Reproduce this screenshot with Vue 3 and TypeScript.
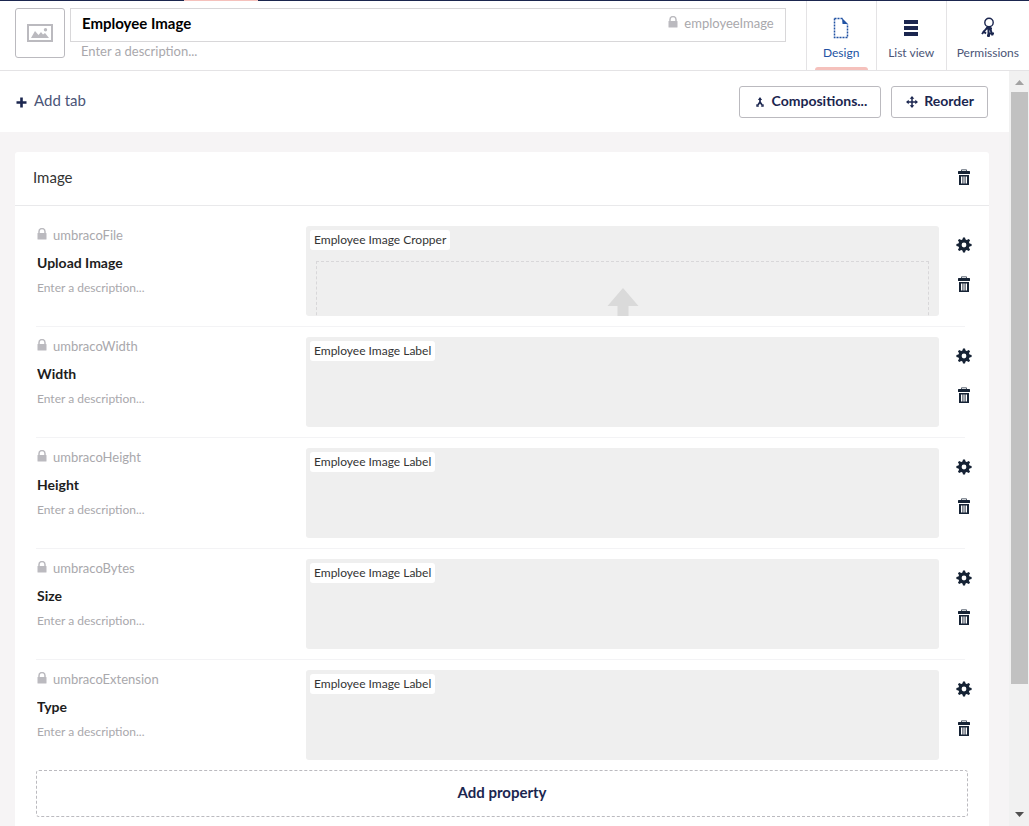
<script setup lang="ts">
import { ref } from 'vue'

interface Property {
  alias: string
  name: string
  description: string
  editor: string
  upload?: boolean
}

const name = ref('Employee Image')
const alias = ref('employeeImage')
const description = ref('')
const groupName = ref('Image')
const activeTab = ref('design')

const tabs = [
  { id: 'design', label: 'Design' },
  { id: 'list', label: 'List view' },
  { id: 'permissions', label: 'Permissions' },
]

const properties = ref<Property[]>([
  { alias: 'umbracoFile', name: 'Upload Image', description: '', editor: 'Employee Image Cropper', upload: true },
  { alias: 'umbracoWidth', name: 'Width', description: '', editor: 'Employee Image Label' },
  { alias: 'umbracoHeight', name: 'Height', description: '', editor: 'Employee Image Label' },
  { alias: 'umbracoBytes', name: 'Size', description: '', editor: 'Employee Image Label' },
  { alias: 'umbracoExtension', name: 'Type', description: '', editor: 'Employee Image Label' },
])
</script>

<template>
  <svg class="symbols" aria-hidden="true">
    <symbol id="i-lock" viewBox="0 0 10 12">
      <path d="M2 6V3.600a3 3 0 0 1 6 0V6" fill="none" stroke="currentColor" stroke-width="1.500" />
      <rect x="0.500" y="5" width="9" height="6.500" rx="0.600" fill="currentColor" />
    </symbol>
    <symbol id="i-trash" viewBox="0 0 12 16">
      <path d="M3.500 2.500V0.800h5v1.700" fill="none" stroke="currentColor" stroke-width="1" opacity="0.700" />
      <rect x="0" y="2" width="12" height="3" rx="0.500" fill="currentColor" />
      <path fill-rule="evenodd" fill="currentColor" d="M1 6h10v10H1zM3 7.500v7h1v-7zM5.500 7.500v7h1v-7zM8 7.500v7h1v-7z" />
      <path fill="#fff" opacity="0.450" d="M4 7.500h1.500v7H4zM6.500 7.500H8v7H6.500z" />
    </symbol>
    <symbol id="i-gear" viewBox="0 0 16 16">
      <g fill="currentColor">
        <path fill-rule="evenodd" d="M8 2.300a5.700 5.700 0 1 0 0 11.400a5.700 5.700 0 1 0 0-11.400zM8 5.600a2.400 2.400 0 1 1 0 4.800a2.400 2.400 0 1 1 0-4.800z" />
        <path v-for="a in 8" :key="a" d="M6.200 3.500L7 0.400h2l0.800 3.100z" :transform="`rotate(${a * 45} 8 8)`" />
      </g>
    </symbol>
  </svg>

  <div class="app">
    <div class="strip"><span class="strip-mark"></span></div>

    <header class="header">
      <button class="type-icon" type="button" aria-label="Choose icon">
        <svg width="26" height="18" viewBox="0 0 26 18">
          <rect x="1" y="1" width="24" height="16" fill="none" stroke="#bbbabf" stroke-width="2" />
          <path d="M4 14l4-7 3.500 4 2.500-3 2 2.500 2-1.500L22 14z" fill="#bbbabf" />
          <circle cx="18.500" cy="5.800" r="1.700" fill="#bbbabf" />
        </svg>
      </button>
      <div class="naming">
        <div class="name-box">
          <input v-model="name" class="name-input" aria-label="Name" />
          <span class="alias">
            <svg class="lock" width="10" height="12"><use href="#i-lock" /></svg>
            <span>{{ alias }}</span>
          </span>
        </div>
        <input v-model="description" class="desc-input" aria-label="Description" placeholder="Enter a description..." />
      </div>
      <nav class="tabs">
        <button
          v-for="tab in tabs"
          :key="tab.id"
          type="button"
          class="tab"
          :class="{ active: tab.id === activeTab }"
          @click="activeTab = tab.id"
        >
          <svg v-if="tab.id === 'design'" width="22" height="22" viewBox="0 0 22 22">
            <path d="M4.500 1.500V20.500H17.500V7M4.500 1.500H13" fill="none" stroke="currentColor" stroke-width="1.500" stroke-dasharray="2 1" />
            <path d="M12 1l6 6h-5.500z" fill="currentColor" />
          </svg>
          <svg v-else-if="tab.id === 'list'" width="22" height="22" viewBox="0 0 22 22">
            <path d="M4 3h14v4H4zM4 9h14v4H4zM4 15h14v4H4z" fill="currentColor" />
          </svg>
          <svg v-else width="22" height="22" viewBox="0 0 22 22" fill="none" stroke="currentColor">
            <circle cx="12" cy="5.500" r="4.200" stroke-width="1.400" />
            <path d="M11 9.500L5 17M12.500 9.500L15.500 18.500M11.500 9.500V20" stroke-width="2" />
            <path d="M9 11.500h6M6 14l3 2.500M12 16.500h5M10 18.500h3" stroke-width="1.800" />
          </svg>
          <span>{{ tab.label }}</span>
        </button>
      </nav>
    </header>

    <div class="body">
      <main class="content">
        <div class="toolbar">
          <button class="add-tab" type="button">
            <svg width="11" height="11" viewBox="0 0 11 11"><path d="M5.500 0.500v10M0.500 5.500h10" stroke="currentColor" stroke-width="2.600" /></svg>
            <span>Add tab</span>
          </button>
          <div class="tools">
            <button class="tool" type="button">
              <svg width="12" height="12" viewBox="0 0 12 12" fill="none" stroke="currentColor" stroke-width="1.700">
                <path d="M6 2.500v3.500L3.600 9.500M6 6l2.400 3.500" />
                <path d="M3.900 4L6 1l2.100 3zM2.300 8l2.900 2.800H2.300zM9.700 8l-2.900 2.800h2.900z" fill="currentColor" stroke="none" />
              </svg>
              <span>Compositions...</span>
            </button>
            <button class="tool" type="button">
              <svg width="12" height="12" viewBox="0 0 12 12">
                <path d="M6 1v10M1 6h10" stroke="currentColor" stroke-width="1.500" />
                <path d="M6 0l2.300 2.700H3.700zM6 12l2.300-2.700H3.700zM0 6l2.700-2.300v4.600zM12 6L9.300 3.700v4.600z" fill="currentColor" />
              </svg>
              <span>Reorder</span>
            </button>
          </div>
        </div>

        <section class="group">
          <div class="group-head">
            <input v-model="groupName" class="group-name" aria-label="Group name" />
            <button class="icon-btn" type="button" aria-label="Delete group">
              <svg width="12" height="16"><use href="#i-trash" /></svg>
            </button>
          </div>

          <div class="properties">
            <article v-for="p in properties" :key="p.alias" class="property">
              <div class="meta">
                <div class="prop-alias">
                  <svg class="lock" width="10" height="12"><use href="#i-lock" /></svg>
                  <span>{{ p.alias }}</span>
                </div>
                <input v-model="p.name" class="prop-name" :aria-label="`${p.alias} name`" />
                <input v-model="p.description" class="prop-desc" :aria-label="`${p.alias} description`" placeholder="Enter a description..." />
              </div>
              <div class="preview">
                <span class="editor">{{ p.editor }}</span>
                <div v-if="p.upload" class="dropzone">
                  <svg width="32" height="40" viewBox="0 0 32 40"><path d="M16 0l15.500 18H21.500v22h-11V18H0.500z" fill="#dadada" /></svg>
                </div>
              </div>
              <div class="actions">
                <button class="icon-btn" type="button" :aria-label="`Settings for ${p.name}`">
                  <svg width="16" height="16"><use href="#i-gear" /></svg>
                </button>
                <button class="icon-btn" type="button" :aria-label="`Delete ${p.name}`">
                  <svg width="12" height="16"><use href="#i-trash" /></svg>
                </button>
              </div>
            </article>
            <button class="add-property" type="button">Add property</button>
          </div>
        </section>
      </main>

      <div class="scrollbar" aria-hidden="true">
        <svg width="9" height="5" viewBox="0 0 9 5"><path d="M4.500 0L9 5H0z" fill="#a3a3a3" /></svg>
        <div class="track"><div class="thumb"></div></div>
        <svg width="9" height="5" viewBox="0 0 9 5"><path d="M0 0h9L4.500 5z" fill="#505050" /></svg>
      </div>
    </div>
  </div>
</template>

<style>
html,
body {
  margin: 0;
  overflow: hidden;
}
</style>

<style scoped>
.symbols {
  position: absolute;
  width: 0;
  height: 0;
}
.app {
  display: flex;
  flex-direction: column;
  height: 100vh;
  background: #fff;
  color: #1b264f;
  font-family: Lato, 'Liberation Sans', sans-serif;
  font-size: 15px;
}
.app *,
.app *::after {
  box-sizing: border-box;
}
svg {
  display: block;
  flex: none;
}
button,
input {
  margin: 0;
  padding: 0;
  border: 0;
  outline: 0;
  background: none;
  color: inherit;
  font: inherit;
  min-width: 0;
}
button {
  cursor: pointer;
}
input::placeholder {
  color: #a9a8ac;
  opacity: 1;
}
.strip {
  flex: none;
  height: 1px;
  padding-left: 184px;
  background: #1b264f;
}
.strip-mark {
  display: block;
  width: 74px;
  height: 1px;
  background: #f5c1bc;
}
.header {
  display: flex;
  flex: none;
  height: 70px;
  padding-left: 15px;
  border-bottom: 1px solid #e4e3e5;
}
.type-icon {
  display: flex;
  align-items: center;
  justify-content: center;
  flex: none;
  width: 50px;
  height: 50px;
  margin: 7px 5px 0 0;
  border: 1px solid #bbbabf;
  border-radius: 3px;
}
.naming {
  flex: 1;
  min-width: 0;
  padding-top: 7px;
}
.name-box {
  display: flex;
  align-items: center;
  height: 34px;
  padding: 0 11px;
  border: 1px solid #d8d7d9;
}
.name-input {
  flex: 1;
  height: 32px;
  padding-bottom: 4px;
  color: #000;
  font-weight: 700;
}
.alias,
.prop-alias {
  display: flex;
  align-items: center;
  gap: 6px;
  color: #a9a8ac;
  font-size: 13px;
}
.alias {
  padding-bottom: 4px;
}
.lock {
  margin-bottom: 2px;
  color: #bbbabf;
}
.desc-input {
  display: block;
  width: 100%;
  height: 18px;
  padding-left: 11px;
  font-size: 13px;
}
.tabs {
  display: flex;
  flex: none;
  margin-left: 20px;
}
.tab {
  display: flex;
  flex-direction: column;
  align-items: center;
  gap: 6px;
  min-width: 70px;
  padding: 16px 10px 0;
  border-left: 1px solid #e4e3e5;
  font-size: 12px;
  line-height: 16px;
  color: #4b5577;
}
.tab svg {
  color: #1b264f;
}
.tab.active,
.tab.active svg {
  color: #2152a3;
}
.tab.active {
  padding: 16px 8px 0;
}
.tab.active::after {
  content: '';
  width: 100%;
  height: 4px;
  margin-top: auto;
  border-radius: 3px 3px 0 0;
  background: #f5c1bc;
}
.body {
  display: flex;
  flex: 1;
  min-height: 0;
}
.content {
  flex: 1;
  min-width: 0;
  overflow: hidden;
  background: #f6f4f5;
}
.toolbar {
  display: flex;
  align-items: center;
  justify-content: space-between;
  height: 61px;
  padding: 0 21px 0 16px;
  background: #fff;
}
.add-tab {
  display: flex;
  align-items: center;
  gap: 7px;
  padding-bottom: 3px;
  color: #4b5577;
}
.add-tab svg {
  margin-top: 4px;
  color: #1b264f;
}
.tools {
  display: flex;
  gap: 10px;
}
.tool {
  display: flex;
  align-items: center;
  gap: 6px;
  height: 32px;
  padding: 0 13px 0 14px;
  border: 1px solid #bbbabf;
  border-radius: 3px;
  font-size: 14px;
  font-weight: 700;
}
.tool span {
  padding-bottom: 2px;
}
.group {
  margin: 20px 20px 0 15px;
  border-radius: 3px;
  background: #fff;
}
.group-head {
  display: flex;
  align-items: center;
  justify-content: space-between;
  height: 54px;
  padding: 0 19px 4px 18px;
  border-bottom: 1px solid #e9e9eb;
}
.group-name {
  flex: 1;
  height: 32px;
  color: #343434;
}
.icon-btn {
  display: block;
  color: #162335;
}
.properties {
  padding: 10px 0 20px 21px;
}
.property {
  display: grid;
  grid-template-columns: 270px minmax(0, 1fr) 50px;
  padding-top: 10px;
}
.property:not(:nth-last-child(2))::after {
  content: '';
  grid-column: 1 / -1;
  height: 1px;
  margin: 10px 24px 0 0;
  background: #f3f3f5;
}
.meta {
  padding: 0 20px 0 1px;
}
.prop-alias {
  height: 18px;
}
.prop-name,
.prop-desc {
  display: block;
  width: 100%;
  height: 24px;
}
.prop-name {
  margin-top: 6px;
  color: #1d1d1d;
  font-size: 14px;
  font-weight: 700;
}
.prop-desc {
  height: 26px;
  font-size: 12px;
}
.preview {
  height: 90px;
  padding: 4px;
  overflow: hidden;
  border-radius: 3px;
  background: #efefef;
}
.editor {
  display: block;
  width: fit-content;
  padding: 0 4px;
  border-radius: 3px;
  background: #fff;
  color: #343434;
  font-size: 12px;
  line-height: 20px;
}
.dropzone {
  display: flex;
  justify-content: center;
  height: 90px;
  margin: 11px 6px 0;
  padding-top: 26px;
  border: 1px dashed #d8d7d9;
}
.actions {
  display: flex;
  flex-direction: column;
  align-items: center;
  gap: 23px;
  padding-top: 11px;
}
.add-property {
  display: block;
  width: calc(100% - 21px);
  height: 47px;
  margin-top: 10px;
  padding-bottom: 4px;
  border: 1px dashed #bbbabf;
  border-radius: 3px;
  font-weight: 700;
}
.scrollbar {
  display: flex;
  flex-direction: column;
  align-items: center;
  flex: none;
  width: 20px;
  padding: 9px 0 9px 1px;
  background: #f1f1f1;
}
.track {
  flex: 1;
  width: 17px;
  margin: 7px 0;
}
.thumb {
  height: 83%;
  background: #c1c1c1;
}
</style>
